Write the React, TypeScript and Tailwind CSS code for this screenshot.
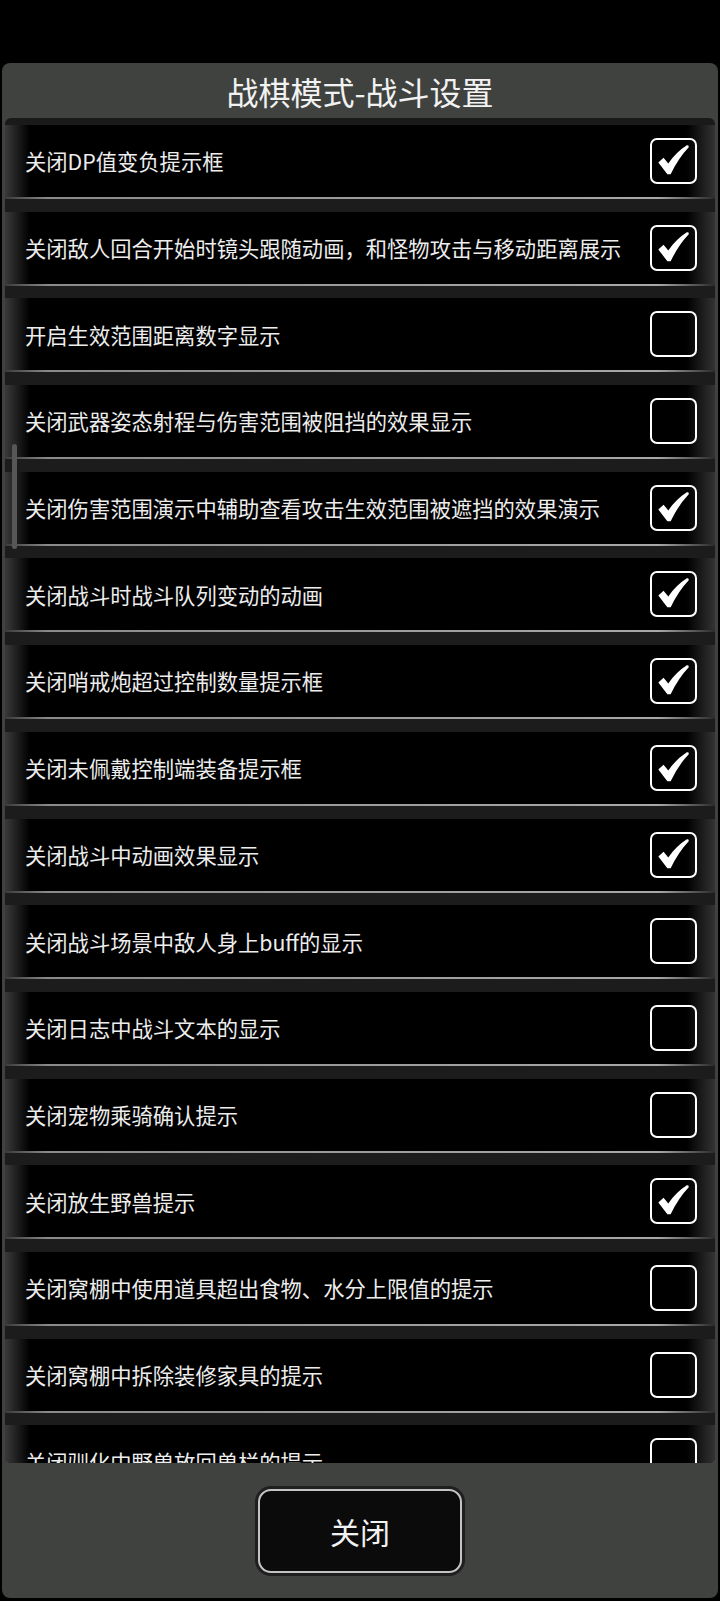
import React from "react";

const rows: { label: string; checked: boolean }[] = [
  { label: "关闭DP值变负提示框", checked: true },
  { label: "关闭敌人回合开始时镜头跟随动画，和怪物攻击与移动距离展示", checked: true },
  { label: "开启生效范围距离数字显示", checked: false },
  { label: "关闭武器姿态射程与伤害范围被阻挡的效果显示", checked: false },
  { label: "关闭伤害范围演示中辅助查看攻击生效范围被遮挡的效果演示", checked: true },
  { label: "关闭战斗时战斗队列变动的动画", checked: true },
  { label: "关闭哨戒炮超过控制数量提示框", checked: true },
  { label: "关闭未佩戴控制端装备提示框", checked: true },
  { label: "关闭战斗中动画效果显示", checked: true },
  { label: "关闭战斗场景中敌人身上buff的显示", checked: false },
  { label: "关闭日志中战斗文本的显示", checked: false },
  { label: "关闭宠物乘骑确认提示", checked: false },
  { label: "关闭放生野兽提示", checked: true },
  { label: "关闭窝棚中使用道具超出食物、水分上限值的提示", checked: false },
  { label: "关闭窝棚中拆除装修家具的提示", checked: false },
  { label: "关闭驯化中野兽放回兽栏的提示", checked: false },
];

function CheckBox({ checked }: { checked: boolean }) {
  return (
    <div className="w-[47px] h-[46px] shrink-0 border-[2.5px] border-white rounded-[7px] flex items-center justify-center">
      {checked && (
        <svg width="38" height="38" viewBox="0 0 40 40">
          <path
            d="M3.5 21.5 L9 16.5 L14 22.5 Q22.5 10.5 33.5 3.5 Q36 3 35.5 5.5 Q24.5 17 16.5 34 L13 34 Z"
            fill="#fff"
          />
        </svg>
      )}
    </div>
  );
}

function SettingRow({ label, checked }: { label: string; checked: boolean }) {
  return (
    <div className="shrink-0">
      <div className="h-[72px] flex items-center justify-between pl-[20px] pr-[18px] bg-[linear-gradient(to_right,#3a3a3a_0%,#000_3.5%,#000_96%,#333_100%)]">
        <span className="text-[21.3px] text-[#ededed] whitespace-nowrap leading-none">{label}</span>
        <CheckBox checked={checked} />
      </div>
      <div className="h-[2px] bg-[linear-gradient(to_right,#3a3a3a_0%,#8a8a8a_6%,#9c9c9c_50%,#a8a8a8_92%,#2a2a2a_100%)]" />
      <div className="h-[12.7px] bg-[#1c1c1c]" />
    </div>
  );
}

export default function App() {
  return (
    <div
      className="w-[720px] h-[1601px] bg-black overflow-hidden pt-[63px] px-[2px]"
      style={{ fontFamily: '"Noto Sans CJK SC", "Noto Sans", sans-serif' }}
    >
      <div className="h-[1535px] bg-[#3f423f] rounded-[8px] flex flex-col">
        <div className="h-[55px] flex items-center justify-center text-[32px] text-[#f2f2f2] leading-none">
          战棋模式-战斗设置
        </div>
        <div className="relative mx-[3px] h-[1345px] bg-[#1a1a1a] rounded-[6px] pt-[7px] overflow-hidden flex flex-col">
          {rows.map((r) => (
            <SettingRow key={r.label} label={r.label} checked={r.checked} />
          ))}
          {/* scrollbar */}
          <div className="absolute left-[7px] top-[326px] w-[5px] h-[105px] rounded-full bg-[#575757]" />
        </div>
        <div className="flex-1 flex items-center justify-center">
          <div className="rounded-[16px] bg-[#1e1f1e] p-[3px]">
            <button className="w-[204px] h-[84px] rounded-[13px] border-2 border-[#c4c4c4] bg-[#0b0b0b] text-[30px] text-[#f2f2f2] leading-none flex items-center justify-center">
              关闭
            </button>
          </div>
        </div>
      </div>
    </div>
  );
}
